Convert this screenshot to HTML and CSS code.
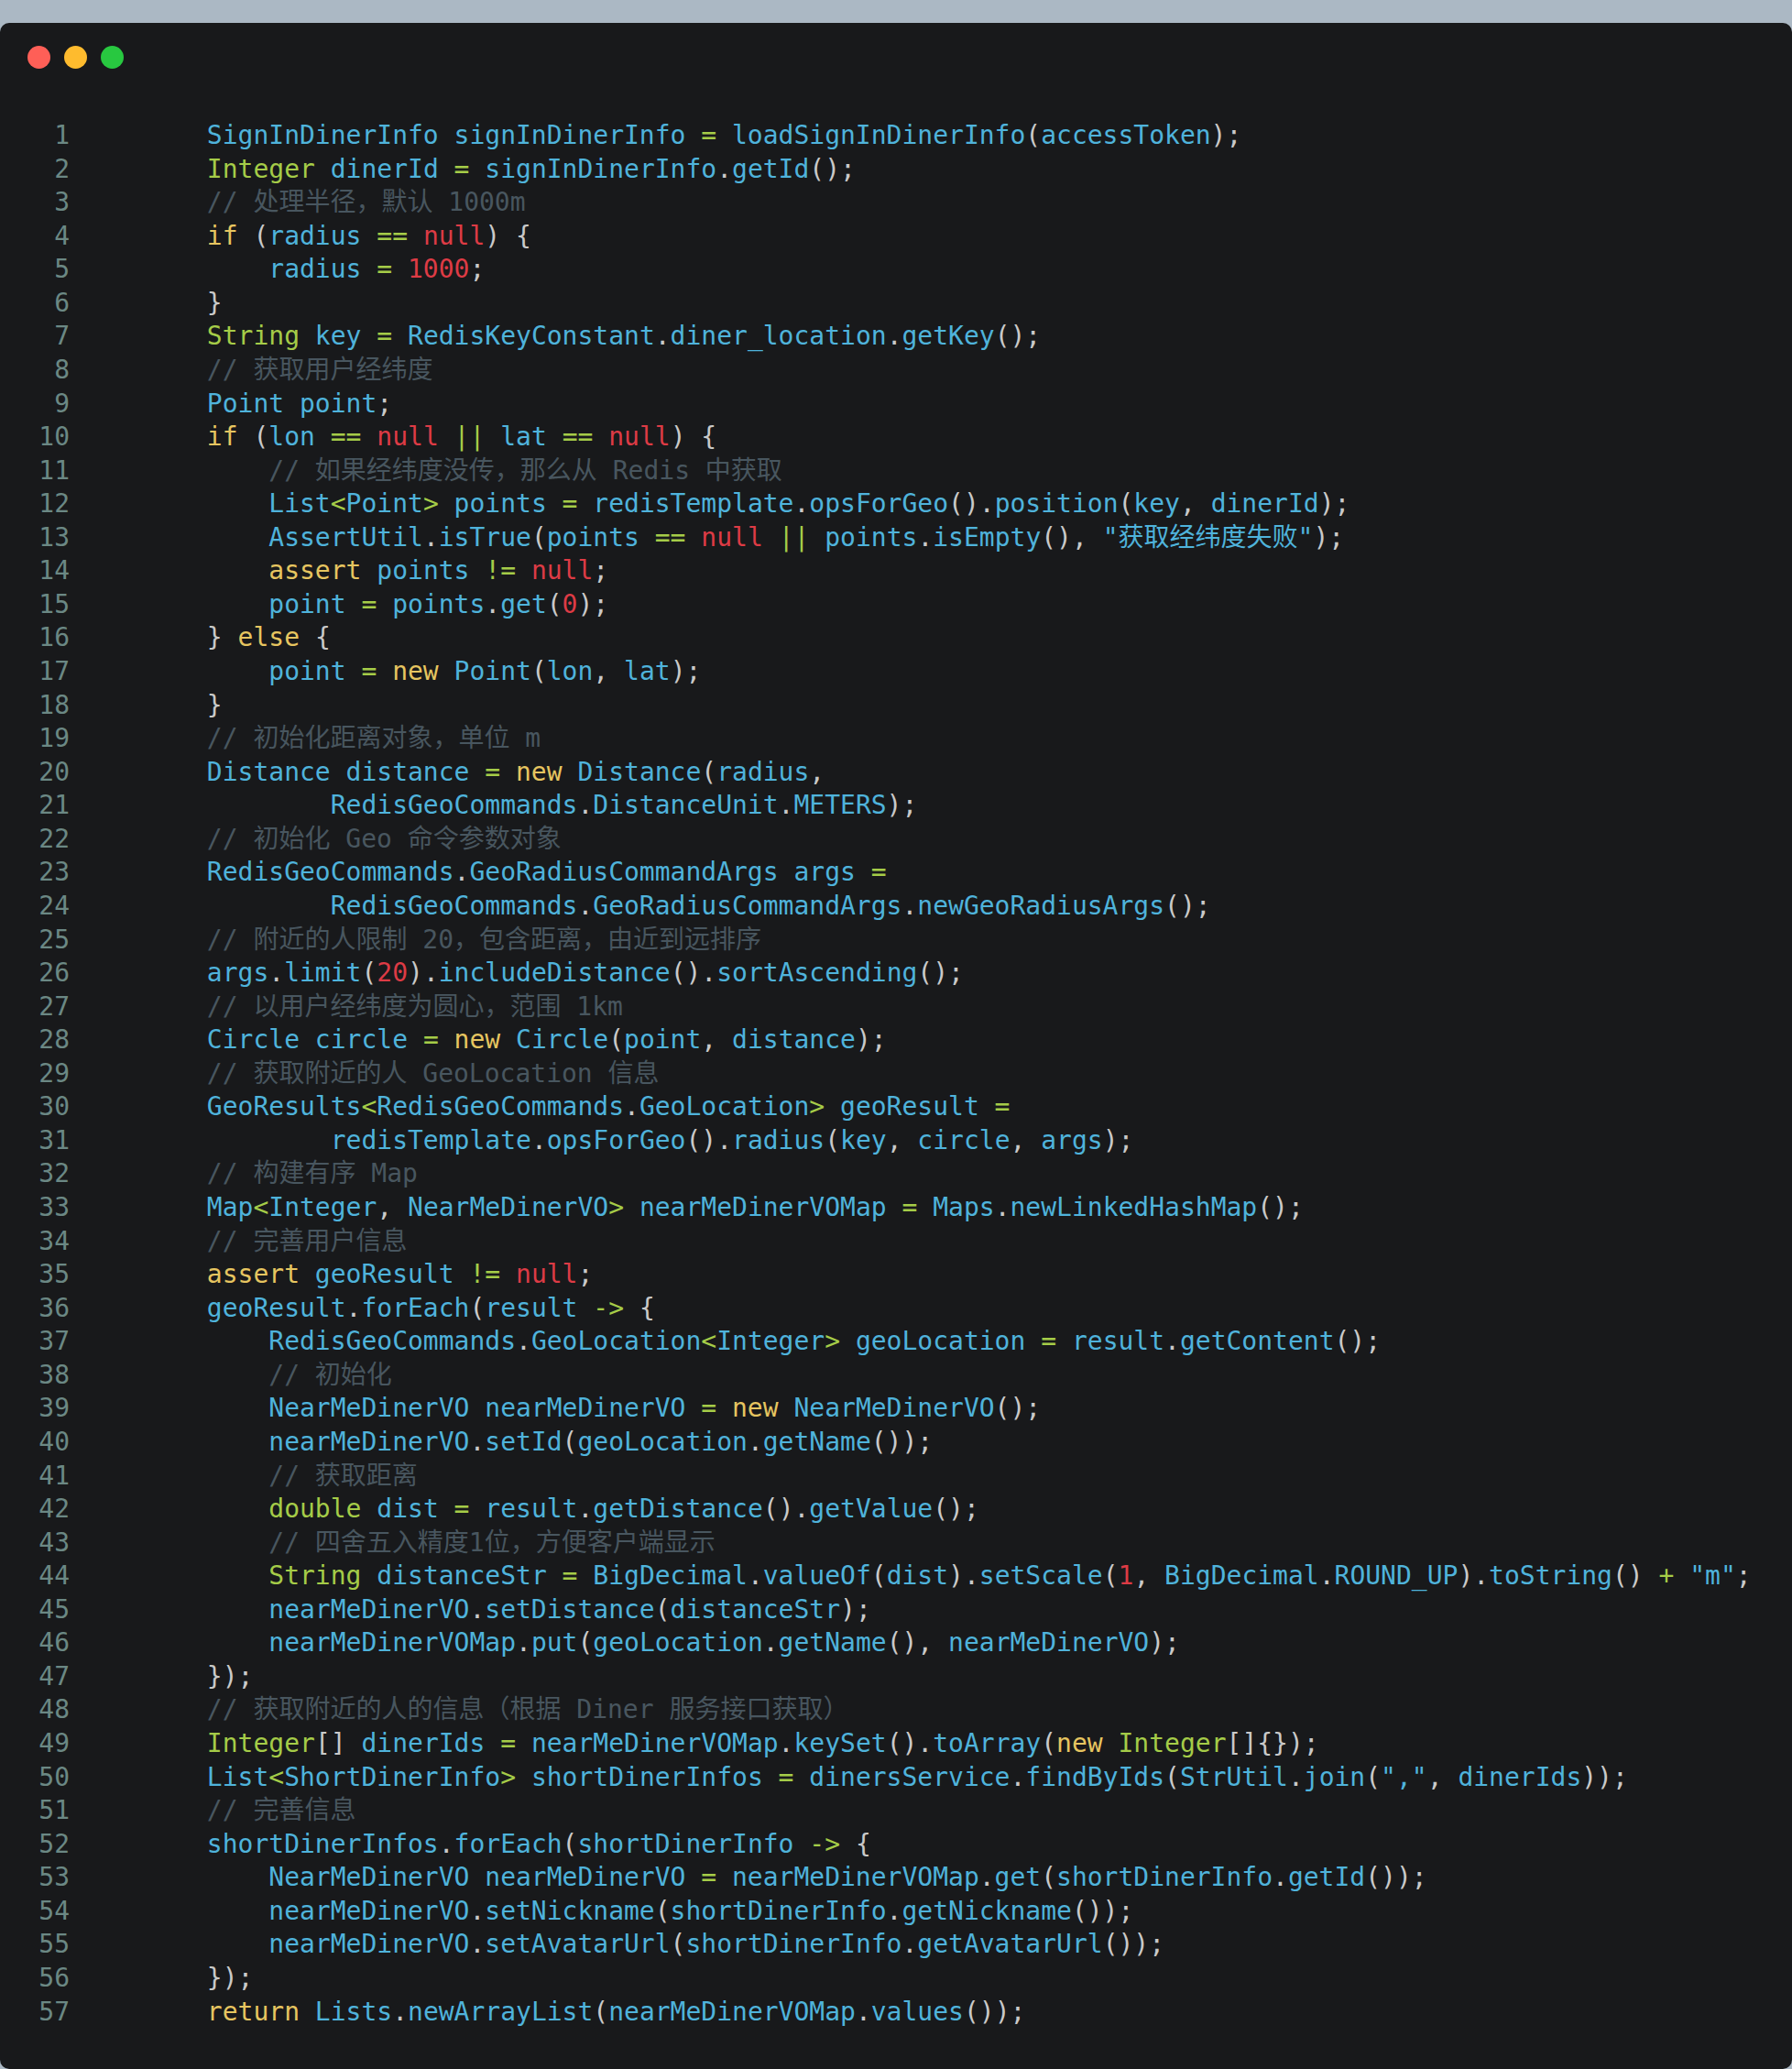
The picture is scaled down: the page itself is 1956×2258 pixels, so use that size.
FILE: index.html
```html
<!DOCTYPE html>
<html lang="zh">
<head>
<meta charset="utf-8">
<title>Code</title>
<link rel="stylesheet" href="styles.css">
</head>
<body>
<div class="window">
  <div class="titlebar">
    <span class="dot red"></span>
    <span class="dot yellow"></span>
    <span class="dot green"></span>
  </div>
  <div class="code">
<div class="row"><span class="ln">1</span><span class="src">        SignInDinerInfo signInDinerInfo <span class="o">=</span> loadSignInDinerInfo<span class="p">(</span>accessToken<span class="p">);</span></span></div>
<div class="row"><span class="ln">2</span><span class="src">        <span class="t">Integer</span> dinerId <span class="o">=</span> signInDinerInfo<span class="p">.</span>getId<span class="p">();</span></span></div>
<div class="row"><span class="ln">3</span><span class="src">        <span class="c">// 处理半径，默认 1000m</span></span></div>
<div class="row"><span class="ln">4</span><span class="src">        <span class="k">if</span> <span class="p">(</span>radius <span class="o">==</span> <span class="n">null</span><span class="p">) {</span></span></div>
<div class="row"><span class="ln">5</span><span class="src">            radius <span class="o">=</span> <span class="n">1000</span><span class="p">;</span></span></div>
<div class="row"><span class="ln">6</span><span class="src">        <span class="p">}</span></span></div>
<div class="row"><span class="ln">7</span><span class="src">        <span class="t">String</span> key <span class="o">=</span> RedisKeyConstant<span class="p">.</span>diner_location<span class="p">.</span>getKey<span class="p">();</span></span></div>
<div class="row"><span class="ln">8</span><span class="src">        <span class="c">// 获取用户经纬度</span></span></div>
<div class="row"><span class="ln">9</span><span class="src">        Point point<span class="p">;</span></span></div>
<div class="row"><span class="ln">10</span><span class="src">        <span class="k">if</span> <span class="p">(</span>lon <span class="o">==</span> <span class="n">null</span> <span class="o">||</span> lat <span class="o">==</span> <span class="n">null</span><span class="p">) {</span></span></div>
<div class="row"><span class="ln">11</span><span class="src">            <span class="c">// 如果经纬度没传，那么从 Redis 中获取</span></span></div>
<div class="row"><span class="ln">12</span><span class="src">            List<span class="o">&lt;</span>Point<span class="o">&gt;</span> points <span class="o">=</span> redisTemplate<span class="p">.</span>opsForGeo<span class="p">().</span>position<span class="p">(</span>key<span class="p">, </span>dinerId<span class="p">);</span></span></div>
<div class="row"><span class="ln">13</span><span class="src">            AssertUtil<span class="p">.</span>isTrue<span class="p">(</span>points <span class="o">==</span> <span class="n">null</span> <span class="o">||</span> points<span class="p">.</span>isEmpty<span class="p">(), </span>"获取经纬度失败"<span class="p">);</span></span></div>
<div class="row"><span class="ln">14</span><span class="src">            <span class="k">assert</span> points <span class="o">!=</span> <span class="n">null</span><span class="p">;</span></span></div>
<div class="row"><span class="ln">15</span><span class="src">            point <span class="o">=</span> points<span class="p">.</span>get<span class="p">(</span><span class="n">0</span><span class="p">);</span></span></div>
<div class="row"><span class="ln">16</span><span class="src">        <span class="p">}</span> <span class="k">else</span> <span class="p">{</span></span></div>
<div class="row"><span class="ln">17</span><span class="src">            point <span class="o">=</span> <span class="k">new</span> Point<span class="p">(</span>lon<span class="p">, </span>lat<span class="p">);</span></span></div>
<div class="row"><span class="ln">18</span><span class="src">        <span class="p">}</span></span></div>
<div class="row"><span class="ln">19</span><span class="src">        <span class="c">// 初始化距离对象，单位 m</span></span></div>
<div class="row"><span class="ln">20</span><span class="src">        Distance distance <span class="o">=</span> <span class="k">new</span> Distance<span class="p">(</span>radius<span class="p">,</span></span></div>
<div class="row"><span class="ln">21</span><span class="src">                RedisGeoCommands<span class="p">.</span>DistanceUnit<span class="p">.</span>METERS<span class="p">);</span></span></div>
<div class="row"><span class="ln">22</span><span class="src">        <span class="c">// 初始化 Geo 命令参数对象</span></span></div>
<div class="row"><span class="ln">23</span><span class="src">        RedisGeoCommands<span class="p">.</span>GeoRadiusCommandArgs args <span class="o">=</span></span></div>
<div class="row"><span class="ln">24</span><span class="src">                RedisGeoCommands<span class="p">.</span>GeoRadiusCommandArgs<span class="p">.</span>newGeoRadiusArgs<span class="p">();</span></span></div>
<div class="row"><span class="ln">25</span><span class="src">        <span class="c">// 附近的人限制 20，包含距离，由近到远排序</span></span></div>
<div class="row"><span class="ln">26</span><span class="src">        args<span class="p">.</span>limit<span class="p">(</span><span class="n">20</span><span class="p">).</span>includeDistance<span class="p">().</span>sortAscending<span class="p">();</span></span></div>
<div class="row"><span class="ln">27</span><span class="src">        <span class="c">// 以用户经纬度为圆心，范围 1km</span></span></div>
<div class="row"><span class="ln">28</span><span class="src">        Circle circle <span class="o">=</span> <span class="k">new</span> Circle<span class="p">(</span>point<span class="p">, </span>distance<span class="p">);</span></span></div>
<div class="row"><span class="ln">29</span><span class="src">        <span class="c">// 获取附近的人 GeoLocation 信息</span></span></div>
<div class="row"><span class="ln">30</span><span class="src">        GeoResults<span class="o">&lt;</span>RedisGeoCommands<span class="p">.</span>GeoLocation<span class="o">&gt;</span> geoResult <span class="o">=</span></span></div>
<div class="row"><span class="ln">31</span><span class="src">                redisTemplate<span class="p">.</span>opsForGeo<span class="p">().</span>radius<span class="p">(</span>key<span class="p">, </span>circle<span class="p">, </span>args<span class="p">);</span></span></div>
<div class="row"><span class="ln">32</span><span class="src">        <span class="c">// 构建有序 Map</span></span></div>
<div class="row"><span class="ln">33</span><span class="src">        Map<span class="o">&lt;</span>Integer<span class="p">, </span>NearMeDinerVO<span class="o">&gt;</span> nearMeDinerVOMap <span class="o">=</span> Maps<span class="p">.</span>newLinkedHashMap<span class="p">();</span></span></div>
<div class="row"><span class="ln">34</span><span class="src">        <span class="c">// 完善用户信息</span></span></div>
<div class="row"><span class="ln">35</span><span class="src">        <span class="k">assert</span> geoResult <span class="o">!=</span> <span class="n">null</span><span class="p">;</span></span></div>
<div class="row"><span class="ln">36</span><span class="src">        geoResult<span class="p">.</span>forEach<span class="p">(</span>result <span class="o">-&gt;</span> <span class="p">{</span></span></div>
<div class="row"><span class="ln">37</span><span class="src">            RedisGeoCommands<span class="p">.</span>GeoLocation<span class="o">&lt;</span>Integer<span class="o">&gt;</span> geoLocation <span class="o">=</span> result<span class="p">.</span>getContent<span class="p">();</span></span></div>
<div class="row"><span class="ln">38</span><span class="src">            <span class="c">// 初始化</span></span></div>
<div class="row"><span class="ln">39</span><span class="src">            NearMeDinerVO nearMeDinerVO <span class="o">=</span> <span class="k">new</span> NearMeDinerVO<span class="p">();</span></span></div>
<div class="row"><span class="ln">40</span><span class="src">            nearMeDinerVO<span class="p">.</span>setId<span class="p">(</span>geoLocation<span class="p">.</span>getName<span class="p">());</span></span></div>
<div class="row"><span class="ln">41</span><span class="src">            <span class="c">// 获取距离</span></span></div>
<div class="row"><span class="ln">42</span><span class="src">            <span class="t">double</span> dist <span class="o">=</span> result<span class="p">.</span>getDistance<span class="p">().</span>getValue<span class="p">();</span></span></div>
<div class="row"><span class="ln">43</span><span class="src">            <span class="c">// 四舍五入精度1位，方便客户端显示</span></span></div>
<div class="row"><span class="ln">44</span><span class="src">            <span class="t">String</span> distanceStr <span class="o">=</span> BigDecimal<span class="p">.</span>valueOf<span class="p">(</span>dist<span class="p">).</span>setScale<span class="p">(</span><span class="n">1</span><span class="p">, </span>BigDecimal<span class="p">.</span>ROUND_UP<span class="p">).</span>toString<span class="p">()</span> <span class="o">+</span> "m"<span class="p">;</span></span></div>
<div class="row"><span class="ln">45</span><span class="src">            nearMeDinerVO<span class="p">.</span>setDistance<span class="p">(</span>distanceStr<span class="p">);</span></span></div>
<div class="row"><span class="ln">46</span><span class="src">            nearMeDinerVOMap<span class="p">.</span>put<span class="p">(</span>geoLocation<span class="p">.</span>getName<span class="p">(), </span>nearMeDinerVO<span class="p">);</span></span></div>
<div class="row"><span class="ln">47</span><span class="src">        <span class="p">});</span></span></div>
<div class="row"><span class="ln">48</span><span class="src">        <span class="c">// 获取附近的人的信息（根据 Diner 服务接口获取）</span></span></div>
<div class="row"><span class="ln">49</span><span class="src">        <span class="t">Integer</span><span class="p">[]</span> dinerIds <span class="o">=</span> nearMeDinerVOMap<span class="p">.</span>keySet<span class="p">().</span>toArray<span class="p">(</span><span class="k">new</span> <span class="t">Integer</span><span class="p">[]{});</span></span></div>
<div class="row"><span class="ln">50</span><span class="src">        List<span class="o">&lt;</span>ShortDinerInfo<span class="o">&gt;</span> shortDinerInfos <span class="o">=</span> dinersService<span class="p">.</span>findByIds<span class="p">(</span>StrUtil<span class="p">.</span>join<span class="p">(</span>","<span class="p">, </span>dinerIds<span class="p">));</span></span></div>
<div class="row"><span class="ln">51</span><span class="src">        <span class="c">// 完善信息</span></span></div>
<div class="row"><span class="ln">52</span><span class="src">        shortDinerInfos<span class="p">.</span>forEach<span class="p">(</span>shortDinerInfo <span class="o">-&gt;</span> <span class="p">{</span></span></div>
<div class="row"><span class="ln">53</span><span class="src">            NearMeDinerVO nearMeDinerVO <span class="o">=</span> nearMeDinerVOMap<span class="p">.</span>get<span class="p">(</span>shortDinerInfo<span class="p">.</span>getId<span class="p">());</span></span></div>
<div class="row"><span class="ln">54</span><span class="src">            nearMeDinerVO<span class="p">.</span>setNickname<span class="p">(</span>shortDinerInfo<span class="p">.</span>getNickname<span class="p">());</span></span></div>
<div class="row"><span class="ln">55</span><span class="src">            nearMeDinerVO<span class="p">.</span>setAvatarUrl<span class="p">(</span>shortDinerInfo<span class="p">.</span>getAvatarUrl<span class="p">());</span></span></div>
<div class="row"><span class="ln">56</span><span class="src">        <span class="p">});</span></span></div>
<div class="row"><span class="ln">57</span><span class="src">        <span class="k">return</span> Lists<span class="p">.</span>newArrayList<span class="p">(</span>nearMeDinerVOMap<span class="p">.</span>values<span class="p">());</span></span></div>
  </div>
</div>
</body>
</html>
```

FILE: styles.css
```css
html, body {
  margin: 0;
  padding: 0;
}
body {
  background: #abb8c4;
  overflow: hidden;
  padding-top: 25px;
}
.window {
  background: #18191b;
  border-radius: 10px;
  padding: 25px 0 43px 0;
  box-sizing: border-box;
  height: 2233px;
}
.titlebar {
  display: flex;
  gap: 15px;
  padding-left: 30px;
  height: 25px;
}
.dot {
  width: 25px;
  height: 25px;
  border-radius: 50%;
  display: block;
}
.red { background: #fe5f57; }
.yellow { background: #febb2e; }
.green { background: #28c840; }
.code {
  margin-top: 55px;
  font-family: "DejaVu Sans Mono", "Noto Sans CJK SC", monospace;
  font-size: 28px;
  line-height: 36.57px;
  color: #4fb3db;
}
.row {
  display: flex;
  height: 36.57px;
}
.ln {
  width: 76px;
  text-align: right;
  color: #6b8884;
  flex: none;
}
.src {
  white-space: pre;
  padding-left: 15px;
}
.p { color: #c9c9c9; }
.o { color: #a5cc48; }
.t { color: #a5cc48; }
.k { color: #e6c560; }
.n { color: #dd3b45; }
.c { color: #48565f; }
```
